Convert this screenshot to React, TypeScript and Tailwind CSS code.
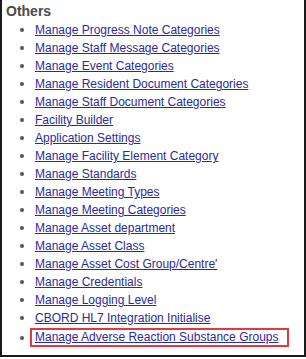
const items = [
  "Manage Progress Note Categories",
  "Manage Staff Message Categories",
  "Manage Event Categories",
  "Manage Resident Document Categories",
  "Manage Staff Document Categories",
  "Facility Builder",
  "Application Settings",
  "Manage Facility Element Category",
  "Manage Standards",
  "Manage Meeting Types",
  "Manage Meeting Categories",
  "Manage Asset department",
  "Manage Asset Class",
  "Manage Asset Cost Group/Centre'",
  "Manage Credentials",
  "Manage Logging Level",
  "CBORD HL7 Integration Initialise",
];

export default function App() {
  return (
    <div className="h-[359px] w-[306px] bg-white pb-[2px] font-['Liberation_Sans',Arial,sans-serif]">
      <div className="h-full w-full border-b-2 border-l-2 border-r-2 border-[#1a1a1a] pl-[4px] pt-[2px]">
        <h2 className="text-[14px] font-bold leading-[18px] text-[#4a4a4a]">Others</h2>
        <ul className="mt-[1px] pl-[14px] text-[12px] leading-[18px]">
          {items.map((item) => (
            <li key={item} className="flex items-center whitespace-nowrap">
              <span className="mr-[11px] h-[4px] w-[4px] rounded-full bg-[#555]" />
              <a href="#" className="text-[#2a2aa0] underline">
                {item}
              </a>
            </li>
          ))}
          <li className="mt-[1px] flex items-center whitespace-nowrap">
            <span className="mr-[6px] h-[4px] w-[4px] rounded-full bg-[#555]" />
            <span className="border-2 border-[#e0393e] pl-[3px] pr-[9px] leading-[15px]">
              <a href="#" className="text-[#2a2aa0] underline">
                Manage Adverse Reaction Substance Groups
              </a>
            </span>
          </li>
        </ul>
      </div>
    </div>
  );
}
